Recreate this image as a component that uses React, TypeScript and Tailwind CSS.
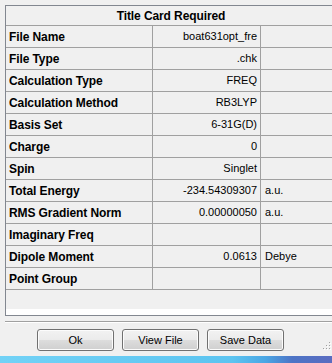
import React from "react";

const rows: { label: string; value: string; unit: string }[] = [
  { label: "File Name", value: "boat631opt_fre", unit: "" },
  { label: "File Type", value: ".chk", unit: "" },
  { label: "Calculation Type", value: "FREQ", unit: "" },
  { label: "Calculation Method", value: "RB3LYP", unit: "" },
  { label: "Basis Set", value: "6-31G(D)", unit: "" },
  { label: "Charge", value: "0", unit: "" },
  { label: "Spin", value: "Singlet", unit: "" },
  { label: "Total Energy", value: "-234.54309307", unit: "a.u." },
  { label: "RMS Gradient Norm", value: "0.00000050", unit: "a.u." },
  { label: "Imaginary Freq", value: "", unit: "" },
  { label: "Dipole Moment", value: "0.0613", unit: "Debye" },
  { label: "Point Group", value: "", unit: "" },
];

const bold = "font-['Liberation_Sans',Arial,sans-serif] font-bold text-[12px] tracking-[-0.1px]";
const reg = "font-['Liberation_Sans',Arial,sans-serif] text-[11px]";

function Btn({ children }: { children: React.ReactNode }) {
  return (
    <div
      className={`w-[77px] h-[22px] rounded-[3px] border border-[#707070] flex items-center justify-center text-black ${reg} bg-[linear-gradient(to_bottom,#f2f2f2_0%,#ebebeb_50%,#dddddd_51%,#cfcfcf_100%)] shadow-[inset_0_0_0_1px_#fcfcfc]`}
    >
      {children}
    </div>
  );
}

export default function App() {
  return (
    <div className="relative w-[332px] h-[363px] bg-[#f0f0f0] overflow-hidden flex flex-col">
      <div className="ml-[5px] mt-[5px] w-[331px] h-[311px] shrink-0 border-l border-t border-b border-[#828790] flex flex-col">
        <div className={`h-[20px] shrink-0 border-b border-[#a0a0a0] flex items-center justify-center text-black ${bold}`}>
          Title Card Required
        </div>
        {rows.map((r) => (
          <div key={r.label} className="h-[22px] shrink-0 border-b border-[#a0a0a0] flex">
            <div className={`w-[147px] shrink-0 border-r border-[#a0a0a0] flex items-center pl-[3px] text-black ${bold}`}>
              {r.label}
            </div>
            <div className={`w-[108px] shrink-0 border-r border-[#a0a0a0] flex items-center justify-end pr-[3px] text-black ${reg}`}>
              {r.value}
            </div>
            <div className={`flex-1 flex items-center pl-[4px] text-black ${reg}`}>{r.unit}</div>
          </div>
        ))}
        <div className="flex-1" />
        <div className="h-[6px] shrink-0 bg-white" />
      </div>
      <div className="ml-[5px] mt-[5px] h-[2px] shrink-0 border-t border-[#a0a0a0] border-b border-b-white" />
      <div className="ml-[37px] mt-[6px] flex gap-[8px] shrink-0">
        <Btn>Ok</Btn>
        <Btn>View File</Btn>
        <Btn>Save Data</Btn>
      </div>
      <div className="mt-auto h-[7px] shrink-0 bg-[linear-gradient(to_right,#72d2f6_0%,#5cc4f0_70%,#4aa6e4_80%,#4d74c6_88%,#5a6cc0_100%)]" />
      <svg className="absolute left-[322px] top-[341px]" width="10" height="10" viewBox="0 0 10 10">
        {[
          [7, 1],
          [7, 4],
          [4, 4],
          [7, 7],
          [4, 7],
          [1, 7],
        ].map(([x, y], i) => (
          <g key={i}>
            <rect x={x + 1} y={y + 1} width="1" height="1" fill="#ffffff" />
            <rect x={x} y={y} width="1" height="1" fill="#a0a0a0" />
          </g>
        ))}
      </svg>
    </div>
  );
}
